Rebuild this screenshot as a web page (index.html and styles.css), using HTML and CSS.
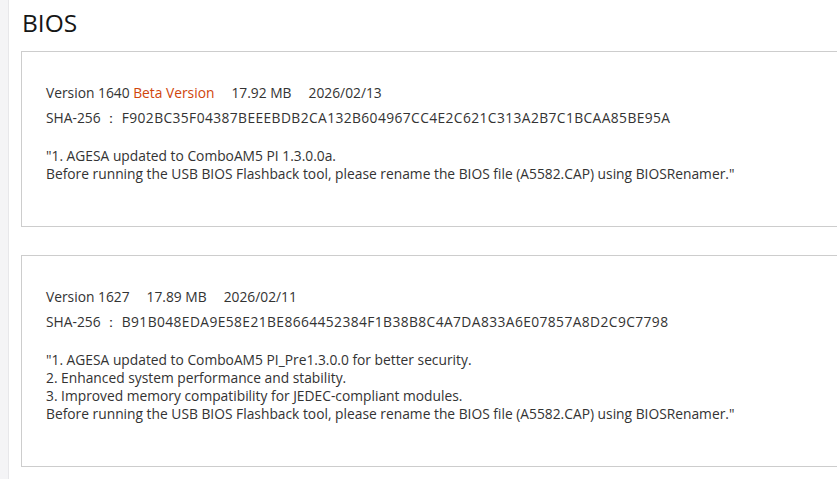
FILE: index.html
```html
<!DOCTYPE html>
<html lang="en">
<head>
    <meta charset="UTF-8">
    <meta name="viewport" content="width=device-width, initial-scale=1.0">
    <title>BIOS</title>
    <link rel="stylesheet" href="styles.css">
</head>
<body>
    <div class="sidebar"></div>
    <div class="main">
        <h1>BIOS</h1>

        <div class="card">
            <div class="meta">
                <span class="item">Version 1640 <span class="beta">Beta Version</span></span>
                <span class="item">17.92 MB</span>
                <span class="item">2026/02/13</span>
            </div>
            <p class="sha">SHA-256 ： <span class="hash">F902BC35F04387BEEEBDB2CA132B604967CC4E2C621C313A2B7C1BCAA85BE95A</span></p>
            <p class="desc">"1. AGESA updated to ComboAM5 PI 1.3.0.0a.<br>
            Before running the USB BIOS Flashback tool, please rename the BIOS file (A5582.CAP) using BIOSRenamer."</p>
        </div>

        <div class="card">
            <div class="meta">
                <span class="item">Version 1627</span>
                <span class="item">17.89 MB</span>
                <span class="item">2026/02/11</span>
            </div>
            <p class="sha">SHA-256 ： <span class="hash">B91B048EDA9E58E21BE8664452384F1B38B8C4A7DA833A6E07857A8D2C9C7798</span></p>
            <p class="desc">"1. AGESA updated to ComboAM5 PI_Pre1.3.0.0 for better security.<br>
            2. Enhanced system performance and stability.<br>
            3. Improved memory compatibility for JEDEC-compliant modules.<br>
            Before running the USB BIOS Flashback tool, please rename the BIOS file (A5582.CAP) using BIOSRenamer."</p>
        </div>
    </div>
</body>
</html>
```

FILE: styles.css
```css
html, body {
    overflow: hidden;
}
body {
    margin: 0;
    display: flex;
    min-height: 100vh;
    font-family: "Open Sans", Arial, sans-serif;
    color: #333;
    background-color: #fff;
}
.sidebar {
    width: 8px;
    flex-shrink: 0;
    background-color: #f4f4f6;
    border-right: 1px solid #e7e7ea;
}
.main {
    flex: 1;
    min-width: 0;
    padding-left: 12px;
}
h1 {
    font-size: 24.5px;
    font-weight: 400;
    color: #161616;
    margin: 8px 0 13px 1px;
    line-height: 30px;
}
.card {
    border: 1px solid #cdcdcd;
    margin-right: -30px;
    margin-bottom: 28px;
    padding: 32px 24px 43px;
    font-size: 13.8px;
    line-height: 18px;
}
.meta {
    display: flex;
    gap: 17px;
    margin-bottom: 7px;
}
.beta {
    color: #d0450b;
}
.sha {
    margin: 0;
}
.hash {
    letter-spacing: 0.4px;
}
.desc {
    margin: 20px 0 0;
}
```
